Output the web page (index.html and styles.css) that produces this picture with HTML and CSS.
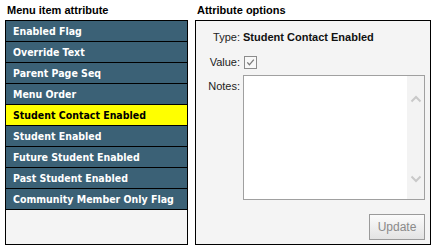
FILE: index.html
```html
<!DOCTYPE html>
<html>
<head>
<meta charset="utf-8">
<link rel="stylesheet" href="styles.css">
</head>
<body>
<div class="page">
  <section class="col col-left">
    <h2 class="heading">Menu item attribute</h2>
    <div class="box list">
      <div class="item">Enabled Flag</div>
      <div class="item">Override Text</div>
      <div class="item">Parent Page Seq</div>
      <div class="item">Menu Order</div>
      <div class="item selected">Student Contact Enabled</div>
      <div class="item">Student Enabled</div>
      <div class="item">Future Student Enabled</div>
      <div class="item">Past Student Enabled</div>
      <div class="item">Community Member Only Flag</div>
    </div>
  </section>
  <section class="col col-right">
    <h2 class="heading">Attribute options</h2>
    <div class="box options">
      <div class="row row-type">
        <div class="label">Type:</div>
        <div class="value">Student Contact Enabled</div>
      </div>
      <div class="row row-value">
        <div class="label">Value:</div>
        <span class="check"><svg width="11" height="11" viewBox="0 0 11 11"><path d="M2.3 5.4 L4.4 7.8 L8.8 2.6" fill="none" stroke="#7a7a7a" stroke-width="1.3"/></svg></span>
      </div>
      <div class="row row-notes">
        <div class="label label-notes">Notes:</div>
        <div class="notes">
          <div class="notes-text"></div>
          <div class="scroll">
            <svg class="arrow" width="12" height="8" viewBox="0 0 12 8"><path d="M1.5 6.5 L6 2 L10.5 6.5" fill="none" stroke="#c9c9c9" stroke-width="2"/></svg>
            <svg class="arrow" width="12" height="8" viewBox="0 0 12 8"><path d="M1.5 1.5 L6 6 L10.5 1.5" fill="none" stroke="#c9c9c9" stroke-width="2"/></svg>
          </div>
        </div>
      </div>
      <div class="actions">
        <button class="btn" type="button">Update</button>
      </div>
    </div>
  </section>
</div>
</body>
</html>
```
FILE: styles.css
```css
html, body {
  margin: 0;
  padding: 0;
  background: #ffffff;
}
body {
  font-family: "Liberation Sans", Arial, sans-serif;
  font-size: 11px;
  color: #1a1a1a;
}
.page {
  display: flex;
  gap: 7px;
  padding-left: 5px;
}
.col {
  display: flex;
  flex-direction: column;
}
.col-left { width: 183px; }
.col-right { width: 236px; }
.heading {
  margin: 0;
  height: 20px;
  line-height: 20px;
  font-size: 11px;
  font-weight: bold;
  padding-left: 2px;
  color: #000;
}
.box {
  border: 1px solid #000;
  background: #f4f4f4;
  box-sizing: border-box;
  height: 225px;
}
.list {
  display: flex;
  flex-direction: column;
}
.item {
  height: 20px;
  line-height: 20px;
  border-bottom: 1px solid #000;
  background: #3b6176;
  color: #ffffff;
  padding-left: 7px;
  font-family: "DejaVu Sans Condensed", "DejaVu Sans", sans-serif;
  font-weight: bold;
  font-size: 10.5px;
  white-space: nowrap;
}
.item.selected {
  background: #ffff00;
  color: #000;
}
.options {
  display: flex;
  flex-direction: column;
  padding: 8px 5px 0 0;
}
.row {
  display: flex;
  gap: 3px;
}
.row-type, .row-value {
  height: 16px;
  align-items: center;
}
.row-value {
  margin-top: 9px;
}
.row-notes {
  margin-top: 5px;
  align-items: flex-start;
}
.label {
  width: 44px;
  flex: none;
  text-align: right;
  line-height: 16px;
  color: #222;
}
.label-notes {
  margin-top: 3px;
}
.value {
  font-weight: bold;
  line-height: 16px;
  color: #111;
}
.check {
  display: inline-flex;
  align-items: center;
  justify-content: center;
  width: 11px;
  height: 11px;
  border: 1px solid #8c8c8c;
  background: #f8f8f8;
  margin-left: 1px;
}
.notes {
  flex: 1;
  height: 125px;
  box-sizing: border-box;
  border: 1px solid #a0a0a0;
  background: #fff;
  display: flex;
}
.notes-text { flex: 1; }
.scroll {
  width: 17px;
  background: #f3f3f3;
  display: flex;
  flex-direction: column;
  justify-content: space-between;
  align-items: center;
  padding: 19px 0 16px;
}
.arrow { display: block; }
.actions {
  display: flex;
  justify-content: flex-end;
  margin-top: 14px;
}
.btn {
  width: 56px;
  height: 26px;
  border: 1px solid #9a9a9a;
  background: linear-gradient(#fbfbfb, #e3e3e3);
  color: #8a8a8a;
  font-family: "Liberation Sans", Arial, sans-serif;
  font-size: 12px;
  padding: 0;
  border-radius: 0;
}
```
